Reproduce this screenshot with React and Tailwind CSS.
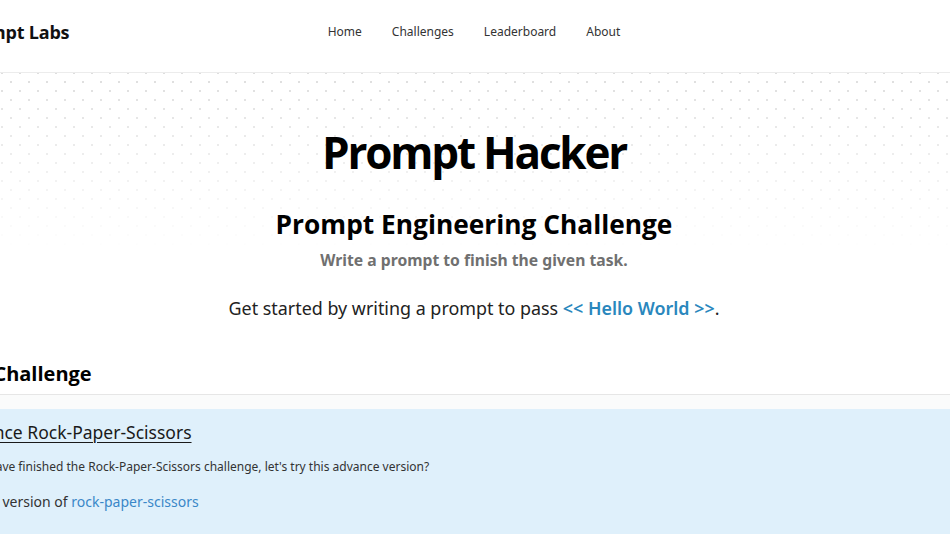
import React from 'react';

const navLinks = ['Home', 'Challenges', 'Leaderboard', 'About'];

export default function App() {
  return (
    <div className="w-[950px] h-[534px] overflow-hidden bg-white font-['Noto_Sans',sans-serif] text-gray-900">
      <div className="-ml-[60px] w-[1068px]">
        {/* Top nav */}
        <header className="h-[73px] pb-[8px] border-b border-[#ececec] px-[18px] grid grid-cols-[1fr_auto_1fr] items-center">
          <div className="font-['Open_Sans',sans-serif] font-bold text-[18px] tracking-[-0.2px] text-[#111]">Prompt Labs</div>
          <nav className="flex items-center gap-[30px] text-[12px] text-[#333]">
            {navLinks.map((l) => (
              <a key={l} href="#" className="hover:text-black">
                {l}
              </a>
            ))}
          </nav>
          <div />
        </header>

        {/* Hero */}
        <section className="pt-[51px] pb-[37px] text-center bg-[linear-gradient(to_bottom,rgba(255,255,255,0)_0%,rgba(255,255,255,1)_62%),radial-gradient(#dedede_0.9px,transparent_1.3px),radial-gradient(#dedede_0.9px,transparent_1.3px)] [background-size:100%_100%,18px_18px,18px_18px] [background-position:0_0,8px_0px,17px_9px]">
          <h1 className="font-['Open_Sans',sans-serif] font-bold text-[44px] leading-[56px] tracking-[-2.2px] text-black">
            Prompt Hacker
          </h1>
          <h2 className="mt-[27px] font-['Open_Sans',sans-serif] font-bold text-[26.3px] leading-[34px] text-black">
            Prompt Engineering Challenge
          </h2>
          <p className="mt-[7px] font-bold text-[15.7px] leading-[24px] text-[#707070]">
            Write a prompt to finish the given task.
          </p>
          <p className="mt-[22px] text-[17.9px] leading-[28px] text-[#222]">
            Get started by writing a prompt to pass{' '}
            <a href="#" className="font-semibold text-[#2a87bd]">
              &lt;&lt; Hello World &gt;&gt;
            </a>
            .
          </p>
        </section>

        {/* Challenge list */}
        <section>
          <h3 className="px-[3px] pb-[5px] font-['Open_Sans',sans-serif] font-bold text-[20px] leading-[30px] text-black border-b border-[#e6e6e6]">
            New Challenge
          </h3>
          <div className="h-[14px] bg-[#fafbfb]" />
          <div className="bg-[#dff0fb] px-[13px] pt-[10px] pb-[20px] h-[140px]">
            <a href="#" className="block text-[17.5px] leading-[26px] underline underline-offset-[3px] decoration-1 text-[#1a1a1a]">
              Advance Rock-Paper-Scissors
            </a>
            <p className="mt-[12px] text-[12px] leading-[20px] text-[#333]">
              If you have finished the Rock-Paper-Scissors challenge, let's try this advance version?
            </p>
            <p className="mt-[14px] pl-[6px] text-[14px] leading-[22px] text-[#333]">
              A new version of{' '}
              <a href="#" className="text-[#3a87c8]">
                rock-paper-scissors
              </a>
            </p>
          </div>
        </section>
      </div>
    </div>
  );
}
